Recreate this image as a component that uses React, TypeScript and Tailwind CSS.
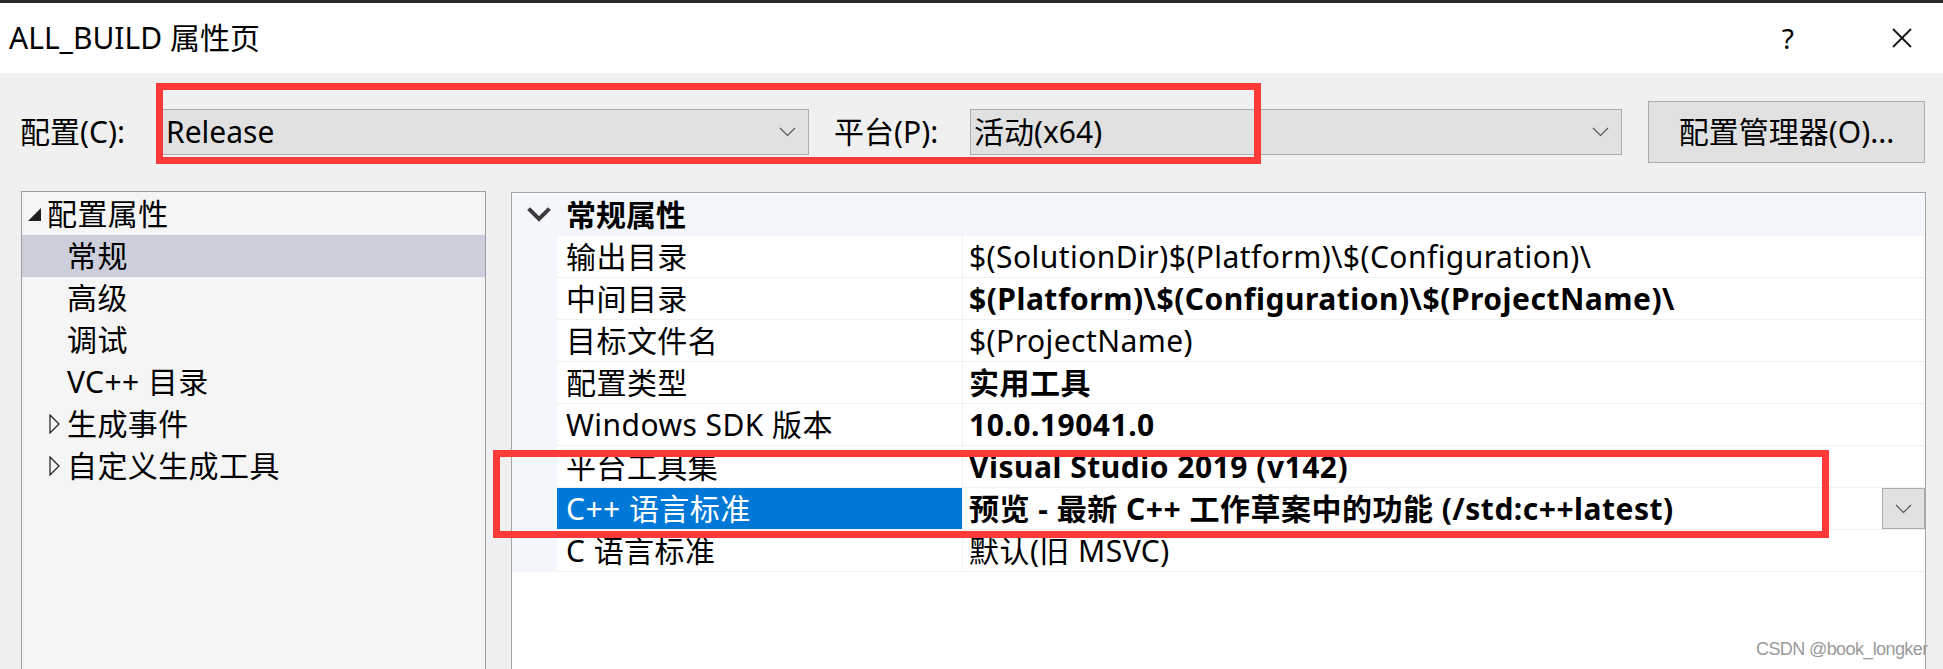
type PropRow = {
  name: string;
  value: string;
  bold?: boolean;
  selected?: boolean;
};

const propRows: PropRow[] = [
  { name: '输出目录', value: '$(SolutionDir)$(Platform)\\$(Configuration)\\' },
  { name: '中间目录', value: '$(Platform)\\$(Configuration)\\$(ProjectName)\\', bold: true },
  { name: '目标文件名', value: '$(ProjectName)' },
  { name: '配置类型', value: '实用工具', bold: true },
  { name: 'Windows SDK 版本', value: '10.0.19041.0', bold: true },
  { name: '平台工具集', value: 'Visual Studio 2019 (v142)', bold: true },
  {
    name: 'C++ 语言标准',
    value: '预览 - 最新 C++ 工作草案中的功能 (/std:c++latest)',
    bold: true,
    selected: true,
  },
  { name: 'C 语言标准', value: '默认(旧 MSVC)' },
];

type TreeItem = {
  label: string;
  root?: boolean;
  expander?: 'open' | 'closed';
  selected?: boolean;
};

const treeItems: TreeItem[] = [
  { label: '配置属性', root: true, expander: 'open' },
  { label: '常规', selected: true },
  { label: '高级' },
  { label: '调试' },
  { label: 'VC++ 目录' },
  { label: '生成事件', expander: 'closed' },
  { label: '自定义生成工具', expander: 'closed' },
];

function ComboChevron() {
  return (
    <svg width="17" height="10" viewBox="0 0 17 10" className="shrink-0">
      <polyline points="1,1 8.5,8.5 16,1" fill="none" stroke="#555" strokeWidth="1.2" />
    </svg>
  );
}

function ComboBox({ value, width }: { value: string; width: string }) {
  return (
    <div
      className={`${width} h-[46px] flex items-center justify-between pl-[3px] pr-[12px] bg-[#e1e1e1] border border-[#adadad]`}
    >
      <span className="text-[30px] leading-none text-black">{value}</span>
      <ComboChevron />
    </div>
  );
}

function Expander({ kind }: { kind?: 'open' | 'closed' }) {
  if (kind === 'open') {
    return (
      <svg width="13" height="13" viewBox="0 0 13 13" className="shrink-0">
        <polygon points="13,0 13,13 0,13" fill="#1e1e1e" />
      </svg>
    );
  }
  if (kind === 'closed') {
    return (
      <svg width="11" height="20" viewBox="0 0 11 20" className="shrink-0">
        <polygon points="1,1 10,10 1,19" fill="none" stroke="#1e1e1e" strokeWidth="1.2" />
      </svg>
    );
  }
  return null;
}

export default function App() {
  return (
    <div className="relative w-[1943px] h-[669px] overflow-hidden flex flex-col bg-[#f0f0f0] text-black font-['Noto_Sans','Noto_Sans_CJK_SC',sans-serif]">
      {/* window top edge */}
      <div className="h-[3px] bg-[#2b2b2b]" />

      {/* Title bar */}
      <div className="h-[70px] bg-white flex items-center pl-[9px] pr-[31px]">
        <h1 className="text-[30px] leading-none font-normal">ALL_BUILD 属性页</h1>
        <div className="ml-auto flex items-center gap-[98px]">
          <span className="text-[28px] leading-none">?</span>
          <svg width="20" height="20" viewBox="0 0 20 20">
            <line x1="1" y1="1" x2="19" y2="19" stroke="#111" strokeWidth="1.8" />
            <line x1="19" y1="1" x2="1" y2="19" stroke="#111" strokeWidth="1.8" />
          </svg>
        </div>
      </div>

      {/* Configuration / platform bar */}
      <div className="h-[118px] flex items-center pl-[20px]">
        <span className="w-[142px] text-[30px] leading-none">配置(C):</span>
        <ComboBox value="Release" width="w-[647px]" />
        <span className="ml-[25px] w-[136px] text-[30px] leading-none">平台(P):</span>
        <ComboBox value="活动(x64)" width="w-[652px]" />
        <button className="ml-[26px] w-[277px] h-[62px] bg-[#e1e1e1] border border-[#adadad] text-[30px] leading-none">
          配置管理器(O)...
        </button>
      </div>

      {/* Main content */}
      <div className="flex-1 min-h-0 flex items-start pl-[21px] gap-[25px]">
        {/* Tree */}
        <div className="w-[465px] h-full bg-[#f5f5f5] border border-b-0 border-[#9c9ca6] pt-[1px]">
          {treeItems.map((item) => (
            <div
              key={item.label}
              className={`h-[42px] flex items-center text-[30px] leading-none ${
                item.selected ? 'bg-[#cccedb]' : ''
              } ${item.root ? 'pl-[6px]' : 'pl-[27px]'}`}
            >
              <div className={`${item.root ? 'w-[13px] mr-[6px]' : 'w-[11px] mr-[7px]'} flex items-center`}>
                <Expander kind={item.expander} />
              </div>
              <span className="tracking-[0.4px]">{item.label}</span>
            </div>
          ))}
        </div>

        {/* Property grid */}
        <div className="mt-[1px] w-[1415px] h-full bg-white border border-b-0 border-[#a5a5a5]">
          <div className="h-[43px] flex items-center bg-[#f3f6fb]">
            <svg width="24" height="16" viewBox="0 0 24 16" className="ml-[15px]">
              <polyline
                points="3,3 12,12 21,3"
                fill="none"
                stroke="#3c3c3c"
                strokeWidth="4"
                strokeLinecap="square"
              />
            </svg>
            <span className="ml-[15px] text-[30px] leading-none font-bold">常规属性</span>
          </div>
          {propRows.map((row) => (
            <div key={row.name} className="h-[42px] flex">
              <div className="w-[45px] bg-[#f3f6fb]" />
              <div
                className={`w-[406px] flex items-center pl-[9px] border-r border-b border-[#f0f0f0] text-[30px] leading-none tracking-[0.45px] ${
                  row.selected ? 'bg-[#0078d7] text-white' : ''
                }`}
              >
                {row.name}
              </div>
              <div className="flex-1 flex items-center pl-[6px] border-b border-[#f0f0f0]">
                <span
                  className={`text-[30px] leading-none ${
                    row.bold ? 'font-bold tracking-[0.5px]' : 'tracking-[0.45px]'
                  }`}
                >
                  {row.value}
                </span>
                {row.selected && (
                  <div className="ml-auto w-[43px] h-[41px] flex items-center justify-center bg-[#e1e1e1] border border-[#adadad]">
                    <ComboChevron />
                  </div>
                )}
              </div>
            </div>
          ))}
        </div>
      </div>

      {/* Annotation boxes */}
      <div className="absolute left-[156px] top-[83px] w-[1105px] h-[81px] border-[7px] border-[#fd3a3a]" />
      <div className="absolute left-[493px] top-[450px] w-[1336px] h-[88px] border-[7px] border-[#fd3a3a]" />

      {/* Watermark */}
      <span className="absolute left-[1756px] top-[640px] whitespace-nowrap text-[18px] leading-none tracking-[-0.6px] text-[#9a9a9a] font-['Liberation_Sans',sans-serif]">
        CSDN @book_longker
      </span>
    </div>
  );
}
